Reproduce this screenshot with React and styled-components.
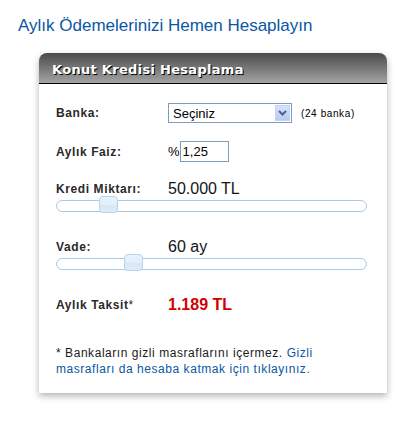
import React from "react";
import styled, { createGlobalStyle } from "styled-components";

const Global = createGlobalStyle`
  html, body { margin: 0; padding: 0; background: #fff; }
  body { font-family: "Liberation Sans", Arial, sans-serif; }
`;

const Page = styled.div`
  width: 408px;
  height: 447px;
  padding: 15px 0 0 18px;
  box-sizing: border-box;
`;

const Title = styled.h1`
  margin: 0;
  font-size: 17px;
  font-weight: normal;
  color: #0b57a4;
  line-height: 22px;
`;

const Panel = styled.div`
  margin: 16px 0 0 21px;
  width: 348px;
  height: 340px;
  background: #fff;
  border-radius: 8px 8px 0 0;
  box-shadow: 0 3px 7px rgba(0, 0, 0, 0.3);
  display: flex;
  flex-direction: column;
`;

const Header = styled.div`
  height: 28px;
  border-radius: 8px 8px 0 0;
  background: linear-gradient(#4b4b4b, #a3a3a3);
  border-bottom: 1px solid #000;
  display: flex;
  align-items: center;
  padding: 2px 0 0 13px;
  box-sizing: content-box;
  color: #fff;
  font-family: "DejaVu Sans", Verdana, sans-serif;
  font-weight: bold;
  font-size: 13px;
  letter-spacing: 0.3px;
  text-shadow: 1px 1px 0 #000;
`;

const Body = styled.div`
  padding: 19px 0 0 17px;
  display: flex;
  flex-direction: column;
`;

const Row = styled.div`
  display: flex;
  align-items: center;
  height: ${(p) => p.$h || 20}px;
  margin-top: ${(p) => p.$mt || 0}px;
`;

const Label = styled.div`
  width: 112px;
  flex: none;
  font-size: 12px;
  font-weight: bold;
  color: #2a2a2a;
  letter-spacing: 0.6px;
`;

const Star = styled.span`
  font-weight: normal;
`;

const Select = styled.div`
  width: 122px;
  height: 18px;
  border: 1px solid #7f9db9;
  display: flex;
  align-items: center;
  font-size: 13px;
  color: #000;
`;

const SelectText = styled.span`
  flex: 1;
  padding-left: 4px;
`;

const SelectArrow = styled.span`
  width: 15px;
  height: 16px;
  margin-right: 1px;
  background: linear-gradient(#d6e3fb, #b6cbf3);
  border: 1px solid #c3d3f5;
  box-sizing: border-box;
  display: flex;
  align-items: center;
  justify-content: center;
`;

const Note = styled.span`
  margin-left: 9px;
  font-size: 10px;
  letter-spacing: 0.6px;
  color: #000;
`;

const Percent = styled.span`
  font-size: 13px;
  color: #000;
`;

const Input = styled.div`
  height: 19px;
  border: 1px solid #7f9db9;
  font-size: 13px;
  line-height: 19px;
  padding-left: 2px;
  box-sizing: content-box;
  width: 45px;
`;

const Value = styled.div`
  font-size: 16px;
  color: ${(p) => p.$color || "#151515"};
  font-weight: ${(p) => (p.$bold ? "bold" : "normal")};
`;

const Track = styled.div`
  position: relative;
  width: 309px;
  height: 10px;
  border: 1px solid #a9cbe6;
  border-radius: 6px;
  background: #fff;
  margin-top: ${(p) => p.$mt || 0}px;
`;

const Handle = styled.div`
  position: absolute;
  top: -5px;
  width: 17px;
  height: 15px;
  border: 1px solid #b8d3ec;
  border-radius: 4px;
  background: linear-gradient(#e9f3fc 0%, #e2eefa 50%, #d8e8f7 51%, #dcebf9 100%);
`;

const Footnote = styled.p`
  margin: 31px 0 0 0;
  width: 270px;
  font-size: 12px;
  line-height: 16px;
  letter-spacing: 0.55px;
  color: #1a1a1a;
`;

const Link = styled.a`
  color: #0b57a4;
  text-decoration: none;
`;

function Slider({ pos, mt }) {
  return (
    <Track $mt={mt}>
      <Handle style={{ left: pos }} />
    </Track>
  );
}

export default function App() {
  return (
    <>
      <Global />
      <Page>
        <Title>Aylık Ödemelerinizi Hemen Hesaplayın</Title>
        <Panel>
          <Header>Konut Kredisi Hesaplama</Header>
          <Body>
            <Row $h={20}>
              <Label>Banka:</Label>
              <Select>
                <SelectText>Seçiniz</SelectText>
                <SelectArrow>
                  <svg width="9" height="6" viewBox="0 0 9 6">
                    <path d="M1 1 L4.5 4.5 L8 1" stroke="#4d6185" strokeWidth="2" fill="none" />
                  </svg>
                </SelectArrow>
              </Select>
              <Note>(24 banka)</Note>
            </Row>
            <Row $h={21} $mt={18}>
              <Label>Aylık Faiz:</Label>
              <Percent>%</Percent>
              <Input>1,25</Input>
            </Row>
            <Row $h={16} $mt={19}>
              <Label>Kredi Miktarı:</Label>
              <Value>50.000 TL</Value>
            </Row>
            <Slider pos={42} mt={3} />
            <Row $h={16} $mt={27}>
              <Label>Vade:</Label>
              <Value>60 ay</Value>
            </Row>
            <Slider pos={67} mt={3} />
            <Row $h={18} $mt={26}>
              <Label>
                Aylık Taksit<Star>*</Star>
              </Label>
              <Value $color="#d40000" $bold>
                1.189 TL
              </Value>
            </Row>
            <Footnote>
              * Bankaların gizli masraflarını içermez.{" "}
              <Link href="#">Gizli masrafları da hesaba katmak için tıklayınız.</Link>
            </Footnote>
          </Body>
        </Panel>
      </Page>
    </>
  );
}
